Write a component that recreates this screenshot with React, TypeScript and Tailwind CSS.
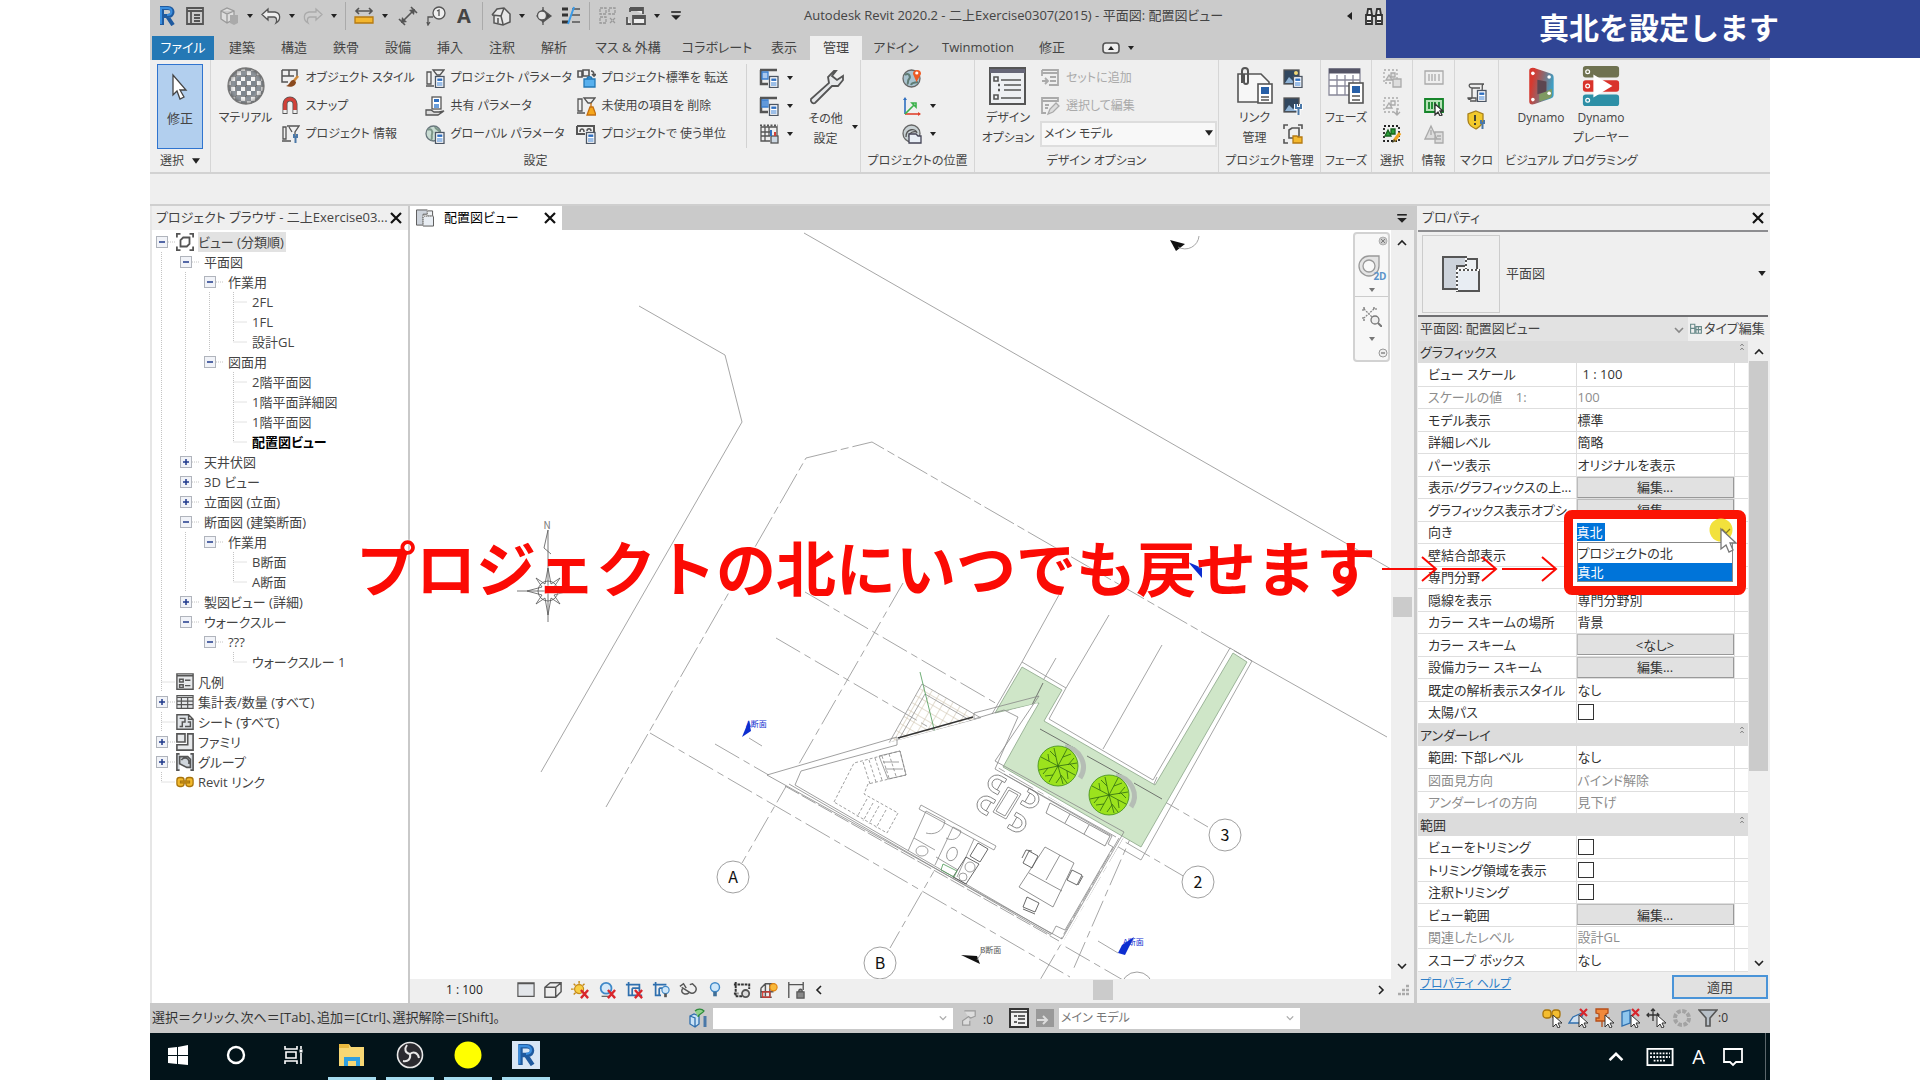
import { useState, type ReactNode } from "react";
import { clsx } from "clsx";
import { twMerge } from "tailwind-merge";

type IconProps = { children: ReactNode; box?: string; className?: string };

function Icon({ children, box = "0 0 20 20", className = "" }: IconProps) {
  return (
    <svg viewBox={box} className={twMerge("size-5 shrink-0", className)} fill="none" stroke="#555" strokeWidth="1.3" aria-hidden="true">
      {children}
    </svg>
  );
}

function Caret({ className = "" }: { className?: string }) {
  return (
    <Icon box="0 0 6 4" className={twMerge("h-1 w-1.5", className)}>
      <path d="M0 0h6L3 4z" fill="#222" stroke="none" />
    </Icon>
  );
}

function Chevron({ dir, className = "" }: { dir: "up" | "down" | "left" | "right"; className?: string }) {
  const paths = {
    up: "M1 7l4-4 4 4",
    down: "M1 3l4 4 4-4",
    left: "M7 1L3 5l4 4",
    right: "M3 1l4 4-4 4",
  };
  return (
    <Icon box="0 0 10 10" className={twMerge("size-2.5", className)}>
      <path d={paths[dir]} stroke="currentColor" strokeWidth="1.6" />
    </Icon>
  );
}

// little parameter sheet that sits in the corner of many ribbon icons
function Sheet({ x = 10, y = 8 }: { x?: number; y?: number }) {
  return (
    <g transform={`translate(${x} ${y})`}>
      <rect x=".5" y=".5" width="8.5" height="11" fill="#fff" stroke="#4b5563" />
      <rect x="2.3" y="2.5" width="5" height="2.4" fill="#2f6fc0" stroke="none" />
      <path d="M2 7h5.5M2 9h5.5" stroke="#3a7fd0" strokeWidth="1" />
    </g>
  );
}

function Wrench() {
  return <path d="M14 10v3h3v-3M15.5 13v6" stroke="#4a78a8" strokeWidth="2" />;
}

const icons = {
  objectStyle: (
    <Icon>
      <path d="M2 2h15v7M2 2v12h6M9 2v6M2 8h12" strokeWidth="1.5" />
      <path d="M18 8l-5 6" stroke="#d08a3a" strokeWidth="2.6" />
      <path d="M14 12c-4-1-4 5-8 6 5 2 10 0 10-4z" fill="#8a4a1f" stroke="none" />
    </Icon>
  ),
  snap: (
    <Icon>
      <path d="M5 18V8a5 5 0 0110 0v10" stroke="#555" strokeWidth="5" />
      <path d="M5 14V8a5 5 0 0110 0v6" stroke="#d24038" strokeWidth="3.4" />
      <path d="M5 17v-3M15 17v-3" stroke="#eee" strokeWidth="3.4" />
    </Icon>
  ),
  projectInfo: (
    <Icon>
      <path d="M3 3h3v12H3zM2 17h9M7 2h12l-4 6v4M9 3l3 5" />
      <Wrench />
    </Icon>
  ),
  projectParam: (
    <Icon>
      <path d="M2 4h4v12H2zM1 18h8M8 2h11l-4 5h-3z" />
      <Sheet />
    </Icon>
  ),
  sharedParam: (
    <Icon>
      <rect x="7" y="1" width="9" height="12" fill="#fff" />
      <rect x="9" y="3" width="5" height="3" fill="#2f6fc0" stroke="none" />
      <path d="M9 9h5M9 11h5" stroke="#3a7fd0" />
      <path d="M1 14h5l3 2h5l5-1-6 4H1z" fill="#ddd" />
    </Icon>
  ),
  globalParam: (
    <Icon>
      <circle cx="8.5" cy="9.5" r="7.5" fill="#c9dcd3" stroke="#68767c" />
      <path d="M3 6c3-2 5 1 4 4s1 4-1 6M10 3c1 3 4 2 5 5" stroke="#7d978a" strokeWidth="2" />
      <Sheet />
    </Icon>
  ),
  transfer: (
    <Icon>
      <path d="M2 3h4v6H2zM7 2h6v6H7zM15 3c3 0 3 2 3 4M16 6l2 2 2-2" strokeWidth="1.6" />
      <path d="M8 11h11v8H8zM11 11c0-3 5-3 5 0" fill="#58b0ee" stroke="#2478b5" />
    </Icon>
  ),
  purge: (
    <Icon>
      <path d="M2 3h4v12H2zM1 17h8M8 2h11l-4 5h-3z" />
      <path d="M15 7v4M14 11h3l3 8h-9z" fill="#f6a71c" stroke="#c46f10" />
    </Icon>
  ),
  units: (
    <Icon>
      <path d="M1 2h17v7M1 2v8h8" strokeWidth="2" />
      <path d="M4 8c0-4 4-4 4 0M11 7c0-3 4-3 4 0" strokeWidth="1.5" />
      <Sheet />
    </Icon>
  ),
  structural: (
    <Icon>
      <path d="M1 2h17M2 2v14h7" strokeWidth="2.5" />
      <path d="M3 4h6v7H3z" fill="#a9c8ee" stroke="#3a7fd0" />
      <Sheet />
    </Icon>
  ),
  mep: (
    <Icon>
      <path d="M1 2h17M2 2v14h7" strokeWidth="2.5" />
      <path d="M3 4h6v7H3zM5 4v7M7 4v7" fill="#a9c8ee" stroke="#3a7fd0" />
      <Sheet />
    </Icon>
  ),
  panels: (
    <Icon>
      <path d="M2 3h16v9M2 3v14h9M2 8h9M2 12h9M6 3v14M10 3v9" />
      <path d="M1 1.5h18" strokeDasharray="2 1.5" strokeWidth="2" />
      <rect x="12" y="12" width="7" height="7" fill="#ccd7e2" />
      <path d="M12 6v6" stroke="#2f6fc0" strokeWidth="2" />
      <path d="M16 8v4" stroke="#d24038" strokeWidth="2" />
    </Icon>
  ),
  location: (
    <Icon>
      <circle cx="9.5" cy="10.5" r="8.5" fill="#a9c3cf" stroke="#666" />
      <path d="M3 7c4-3 6 2 4 4s0 4-2 5M9 17c1-3 4-2 7-3" stroke="#5f7c74" strokeWidth="2" />
      <path d="M14.5 14L11 6a4 4 0 118 0z" fill="#ee5a24" stroke="none" />
      <circle cx="14.8" cy="5" r="1.6" fill="#fff" stroke="none" />
    </Icon>
  ),
  coords: (
    <Icon>
      <path d="M3 18V3" stroke="#2f6fc0" strokeWidth="1.6" />
      <path d="M3 18h15" stroke="#e0432e" strokeWidth="1.6" />
      <path d="M3 18l9-9M10 7h4v4z" stroke="#3bb14a" strokeWidth="1.6" />
      <path d="M1 4l2-3 2 3z" fill="#2f6fc0" stroke="none" />
      <path d="M16 16l3 2-3 2z" fill="#e0432e" stroke="none" />
    </Icon>
  ),
  position: (
    <Icon>
      <circle cx="9.5" cy="9.5" r="8.5" fill="#c8d1d4" stroke="#666" />
      <path d="M4 13c0-9 10-9 11-4M7 13c0-5 5-6 8-5" />
      <path d="M7 10h7l2 2h3v7H7z" fill="#e8eef5" stroke="#445" />
    </Icon>
  ),
  addToSet: (
    <Icon>
      <path d="M2 2h16v15H9M2 2v6M2 5h16M10 9h6M10 13h6M2 13h5M5 10l3 3-3 3" stroke="#aaa" strokeWidth="1.8" />
    </Icon>
  ),
  pickToEdit: (
    <Icon>
      <path d="M2 7V2h16v4M2 2v15h4M2 5h16M5 9h4M5 12h3" stroke="#aaa" strokeWidth="1.8" />
      <path d="M8 18l2-5 6-6 3 3-6 6z" stroke="#aaa" fill="#ddd" />
    </Icon>
  ),
  imageSheet: (
    <Icon>
      <rect x="1" y="2" width="15" height="14" fill="#31475f" />
      <path d="M2 15l4-6 4 4 5-3v5z" fill="#8fb3d6" stroke="none" />
      <circle cx="13" cy="5" r="2" fill="#f3d777" stroke="none" />
      <Sheet />
    </Icon>
  ),
  imageTool: (
    <Icon>
      <rect x="1" y="2" width="15" height="14" fill="#31475f" />
      <path d="M2 15l4-6 4 4 5-3v5z" fill="#8fb3d6" stroke="none" />
      <path d="M13 8v4h5V8M15.5 12v7" stroke="#fff" strokeWidth="4" />
      <path d="M13 8v4h5V8M15.5 12v7" stroke="#4a78a8" strokeWidth="2" />
    </Icon>
  ),
  startView: (
    <Icon>
      <path d="M1 5V1h4M15 1h4v4M1 15v4h4M6 6l3-2h7v8l-2 2H6z" strokeWidth="1.6" />
      <path d="M10 12h4l1 1h4v6h-9z" fill="#f4b92e" stroke="#b57a12" />
    </Icon>
  ),
  selSave: (
    <Icon>
      <path d="M2 2h13v13H2z" strokeDasharray="2 2" stroke="#aaa" />
      <path d="M4 12l3-5 3 5zM9 5h4v4H9zM11 11h8v8h-8z" stroke="#aaa" fill="#ddd" />
    </Icon>
  ),
  selLoad: (
    <Icon>
      <path d="M2 2h14v14H2z" strokeDasharray="2 2" stroke="#aaa" />
      <path d="M4 12l3-5 3 5zM9 5h4v4H9zM15 12v7M12 16l3 3 3-3" stroke="#aaa" />
    </Icon>
  ),
  selEdit: (
    <Icon>
      <path d="M2 2h15v15H2z" strokeDasharray="2 2" stroke="#222" strokeWidth="1.8" />
      <path d="M3 12l3-6 3 6zM9 5h4v5H9z" fill="#28a038" stroke="#17641f" />
      <path d="M18 9l-6 8" stroke="#f0a21e" strokeWidth="3.2" />
      <path d="M12 15l-2 4 4-2" fill="#553" stroke="none" />
    </Icon>
  ),
  ids: (
    <Icon>
      <path d="M1 3h18v13H1zM5 6v7M8 6v7M11 6v7M15 6v7" stroke="#aaa" />
    </Icon>
  ),
  idSelect: (
    <Icon>
      <path d="M1 3h18v13H1zM5 6v7M8 6v7M11 6v7M15 6v7" stroke="#16852a" fill="#b7e2b8" strokeWidth="1.8" />
      <path d="M11 8v11l3-3 2 4 2-1-2-4h3z" fill="#fff" stroke="#333" />
    </Icon>
  ),
  warnings: (
    <Icon>
      <path d="M7 2l6 13H1zM7 6v5M11 8h8v11h-8zM13 12h4M13 15h4" stroke="#aaa" fill="#ddd" />
    </Icon>
  ),
  macro: (
    <Icon>
      <path d="M4 2h13c-3 0-1 4-2 6M4 2c-3 0-2 4 1 4h8M5 6v9c0 3-4 3-4 1h8v3H3" fill="#eee" />
      <Sheet />
    </Icon>
  ),
  macroSecurity: (
    <Icon>
      <path d="M9 1l7 3v6c0 5-4 7-7 9-4-2-8-4-8-9V4z" fill="#f2c92c" stroke="#a8801c" />
      <path d="M8 5v6M8 13v2" stroke="#443" strokeWidth="2" />
      <Wrench />
    </Icon>
  ),
};

function RevitMark({ className = "" }: { className?: string }) {
  return (
    <Icon className={className}>
      <path d="M5 19V2h6c6 0 6 8 0 8H7M10 10l6 9" stroke="#1f5a9f" strokeWidth="4" />
      <path d="M4 18V2h6c6 0 6 7 0 7" stroke="#3b8ede" strokeWidth="2" />
    </Icon>
  );
}

function PlanIcon({ className = "" }: { className?: string }) {
  return (
    <Icon box="0 0 38 38" className={className}>
      <path d="M1 2h23v9H15v23H1z" fill="#cdd3db" strokeWidth="2" />
      <path d="M24 4h11v11H24z" fill="#eef1f4" strokeWidth="2" />
      <path d="M15 15h22v21H15z" fill="#e8edf3" strokeWidth="2" />
      <path d="M15 15h22M15 15v21M24 3v12" stroke="#fff" strokeWidth="2" strokeDasharray="2 2" />
    </Icon>
  );
}

function QuickAccess() {
  return (
    <div className="flex items-center gap-2 pl-[7px]">
      <RevitMark />
      <Icon><path d="M2 2h16v16H2zM2 5h16M6 6v12M9 9h6M9 12h6M9 15h6" strokeWidth="1.8" /></Icon>
      <span className="ml-1.5 flex items-center gap-2">
        <Icon><path d="M2 5l6-3 7 3v8l-7 4-6-4zM2 5l6 3 7-3M8 8v9" stroke="#999" fill="#ddd" /><path d="M11 9h8v8l-4 2-4-2z" fill="#aaa" stroke="none" /></Icon>
        <Caret />
      </span>
      <span className="flex items-center gap-2">
        <Icon><path d="M7 3L1 8.5 7 14v-3h6c3 0 3 4 2 6 5-3 5-10-1-11H7z" fill="#eee" /></Icon>
        <Caret />
      </span>
      <span className="flex items-center gap-2">
        <Icon><path d="M13 3l6 5.5-6 5.5v-3H7c-3 0-3 4-2 6C0 14 0 7 6 6h7z" fill="#ccc" stroke="#aaa" /></Icon>
        <Caret />
      </span>
      <span className="h-7 w-px bg-[#aaa]" />
      <span className="flex items-center gap-2">
        <Icon><path d="M2 5h16M5 2L2 5l3 3M15 2l3 3-3 3" strokeWidth="1.6" /><path d="M1 11h18v6H1z" fill="#f3b62e" stroke="#b57a12" /></Icon>
        <Caret />
      </span>
      <Icon className="ml-0.5"><path d="M5 15L15 5M1 13l6 6M13 1l6 6" strokeWidth="1.6" /><path d="M3 17l1-6 5 5zM17 3l-6 1 5 5z" fill="#555" stroke="none" /></Icon>
      <Icon><circle cx="13" cy="7" r="6" fill="#eee" /><path d="M11 5l2-1v6M2 18v-7h5M1 16l1 3 2-3" /></Icon>
      <span className="w-5 text-center text-xl font-bold text-[#444]">A</span>
      <span className="h-7 w-px bg-[#aaa]" />
      <span className="flex items-center gap-2">
        <Icon><path d="M1 9l5-6 7-1 6 6v8l-7 3-9-2V9M1 9l9 1 2 8M10 10l3-8M7 17v-5" fill="#e7e7e7" strokeWidth="1.5" /></Icon>
        <Caret />
      </span>
      <Icon><path d="M10 1v18M4 10l6-6v12z" /><path d="M10 4l8 6-8 6z" fill="#444" /><circle cx="9" cy="9.5" r="4.5" fill="#e5e5e5" /></Icon>
      <Icon><path d="M1 3h6M1 9h6M1 16h6" stroke="#333" strokeWidth="3" /><path d="M11 3h8M11 9h8M11 16h8" /><path d="M13 1L7 18" stroke="#3a9be8" strokeWidth="2" /></Icon>
      <span className="h-7 w-px bg-[#aaa]" />
      <Icon><path d="M2 2h6v6H2zM11 2h6v6h-6zM2 11h6v6H2zM12 12l5 5M17 12l-5 5" stroke="#999" strokeDasharray="3 1" /></Icon>
      <span className="flex items-center gap-2">
        <Icon><path d="M4 2h13v6M4 2v4M4 4h13M1 11v7h4M7 10h12v8H7zM7 12h12" strokeWidth="1.8" fill="#eee" /></Icon>
        <Caret />
      </span>
      <Icon className="size-4"><path d="M4 5h12" stroke="#222" strokeWidth="2" /><path d="M4 9h12l-6 6z" fill="#222" stroke="none" /></Icon>
    </div>
  );
}

const TABS = [
  { label: "建築", width: "w-13" },
  { label: "構造", width: "w-13" },
  { label: "鉄骨", width: "w-13" },
  { label: "設備", width: "w-13" },
  { label: "挿入", width: "w-13" },
  { label: "注釈", width: "w-13" },
  { label: "解析", width: "w-13" },
  { label: "マス & 外構", width: "w-24" },
  { label: "コラボレート", width: "w-[82px]" },
  { label: "表示", width: "w-13" },
  { label: "管理", width: "w-13" },
  { label: "アドイン", width: "w-17" },
  { label: "Twinmotion", width: "w-24" },
  { label: "修正", width: "w-13" },
];

function TabBar() {
  const [active, setActive] = useState("管理");
  return (
    <nav className="flex h-6 items-stretch pl-0.5 text-[13px]">
      <button className="mr-0.5 w-[62px] bg-[#2478b5] text-[13px] text-white">ファイル</button>
      {TABS.map((tab) => (
        <button
          key={tab.label}
          onClick={() => setActive(tab.label)}
          className={clsx("shrink-0 whitespace-nowrap", tab.width, active === tab.label && "bg-[#efefef]")}
        >
          {tab.label}
        </button>
      ))}
      <span className="flex items-center gap-2 pl-6">
        <Icon box="0 0 18 12" className="h-3 w-[18px]">
          <rect x="1" y="1" width="16" height="10" rx="3" strokeWidth="1.6" fill="#eee" />
          <path d="M6 8l3-4 3 4z" fill="#222" stroke="none" />
        </Icon>
        <Caret />
      </span>
    </nav>
  );
}

function Panel({ title, className, children }: { title: ReactNode; className: string; children: ReactNode }) {
  return (
    <section className={clsx("flex shrink-0 flex-col border-r border-[#d6d6d6]", className)}>
      <div className="flex flex-1 justify-center pt-1">{children}</div>
      <h2 className="flex h-[22px] items-center justify-center gap-2 text-xs whitespace-nowrap">{title}</h2>
    </section>
  );
}

function BigButton({ icon, lines, className = "" }: { icon: ReactNode; lines: string[]; className?: string }) {
  return (
    <button className={clsx("flex flex-col items-center text-xs leading-5 whitespace-nowrap", className)}>
      <span className="flex h-11 items-center">{icon}</span>
      {lines.map((line) => (
        <span key={line}>{line}</span>
      ))}
    </button>
  );
}

function SmallButton({ icon, label, disabled }: { icon: ReactNode; label: string; disabled?: boolean }) {
  return (
    <button disabled={disabled} className="flex h-7 items-center gap-1.5 text-xs whitespace-nowrap disabled:text-[#aaa]">
      {icon}
      {label}
    </button>
  );
}

function IconButton({ icon, label, menu }: { icon: ReactNode; label: string; menu?: boolean }) {
  return (
    <button aria-label={label} className="flex h-7 items-center gap-2">
      {icon}
      {menu && <Caret />}
    </button>
  );
}

function Ribbon() {
  return (
    <div className="flex h-[114px] border-b-2 border-[#d2d2d2] bg-[#efefef]">
      <Panel className="w-[61px]" title={<>選択 <Caret className="h-1.5 w-2" /></>}>
        <button className="flex h-[85px] w-[46px] flex-col items-center border border-[#2f74cf] bg-[#b2cfee] pt-2 text-[13px]">
          <Icon box="0 0 16 26" className="h-7 w-4">
            <path d="M1 1v20l4-4 3 8 4-2-4-7h6z" fill="#fff" stroke="#444" />
          </Icon>
          <span className="mt-2">修正</span>
        </button>
      </Panel>

      <Panel className="w-[650px]" title="設定">
        <BigButton
          className="w-16"
          lines={["マテリアル"]}
          icon={
            <Icon box="0 0 40 40" className="size-10">
              <defs>
                <pattern id="checks" width="10" height="10" patternUnits="userSpaceOnUse">
                  <rect width="10" height="10" fill="#f4f4f4" />
                  <path d="M0 0h5v5H0zM5 5h5v5H5z" fill="#7f878f" stroke="none" />
                </pattern>
                <radialGradient id="ball">
                  <stop offset=".6" stopColor="#fff" stopOpacity="0" />
                  <stop offset="1" stopColor="#444" stopOpacity=".6" />
                </radialGradient>
              </defs>
              <circle cx="20" cy="20" r="18" fill="url(#checks)" stroke="none" />
              <circle cx="20" cy="20" r="18" fill="url(#ball)" stroke="#777" />
            </Icon>
          }
        />
        <div className="w-[145px] pl-0.5">
          <SmallButton icon={icons.objectStyle} label="オブジェクト スタイル" />
          <SmallButton icon={icons.snap} label="スナップ" />
          <SmallButton icon={icons.projectInfo} label="プロジェクト 情報" />
        </div>
        <div className="w-[151px] pl-0.5">
          <SmallButton icon={icons.projectParam} label="プロジェクト パラメータ" />
          <SmallButton icon={icons.sharedParam} label="共有 パラメータ" />
          <SmallButton icon={icons.globalParam} label="グローバル  パラメータ" />
        </div>
        <div className="w-[172px] pl-0.5">
          <SmallButton icon={icons.transfer} label="プロジェクト標準を 転送" />
          <SmallButton icon={icons.purge} label="未使用の項目を 削除" />
          <SmallButton icon={icons.units} label="プロジェクトで 使う単位" />
        </div>
        <div className="h-[84px] w-[54px] border-l border-[#d2d2d2] pl-3">
          <IconButton icon={icons.structural} label="構造設定" menu />
          <IconButton icon={icons.mep} label="設備設定" menu />
          <IconButton icon={icons.panels} label="盤集計表テンプレート" menu />
        </div>
        <div className="flex items-center">
          <BigButton
            className="w-[52px]"
            lines={["その他", "設定"]}
            icon={
              <Icon box="0 0 36 36" className="size-9">
                <path d="M26 2l-6 6 1 6L3 30c-1 3 2 5 4 4l17-17 6 0 5-6V7l-6 4-5-4 4-5z" fill="#e6e8ea" strokeWidth="1.8" />
              </Icon>
            }
          />
          <Caret className="mt-10" />
        </div>
      </Panel>

      <Panel className="w-[114px]" title="プロジェクトの位置">
        <div className="w-8">
          <IconButton icon={icons.location} label="場所" />
          <IconButton icon={icons.coords} label="座標" menu />
          <IconButton icon={icons.position} label="位置" menu />
        </div>
      </Panel>

      <Panel className="w-[244px]" title="デザイン オプション">
        <BigButton
          className="w-16"
          lines={["デザイン", "オプション"]}
          icon={
            <Icon box="0 0 38 40" className="h-10 w-[38px]">
              <rect x="1" y="2" width="35" height="36" fill="#eef0f3" strokeWidth="2" />
              <path d="M1 5h35" strokeWidth="4" stroke="#667" />
              <path d="M5 11h4v4H5zM5 29h4v4H5zM12 14h20M15 19h17M15 24h17M12 32h20" strokeWidth="1.6" />
              <path d="M9 19h2M9 24h2" strokeWidth="2.5" />
            </Icon>
          }
        />
        <div className="w-[177px]">
          <SmallButton icon={icons.addToSet} label="セットに追加" disabled />
          <SmallButton icon={icons.pickToEdit} label="選択して編集" disabled />
          <div className="relative">
            <select aria-label="デザイン オプション" className="h-[26px] w-full appearance-none border-2 border-[#ddd] bg-[#f8f8f8] pl-0.5 text-xs">
              <option>メイン モデル</option>
            </select>
            <Caret className="absolute top-2.5 right-1 h-1.5 w-2" />
          </div>
        </div>
      </Panel>

      <Panel className="w-[102px]" title="プロジェクト管理">
        <BigButton
          className="w-[56px]"
          lines={["リンク", "管理"]}
          icon={
            <Icon box="0 0 38 40" className="h-10 w-[38px]">
              <path d="M2 8h23l8 8v20H2z" fill="#f7f7f7" strokeWidth="1.6" />
              <path d="M6 17V5a3 3 0 016 0v11a2 2 0 01-4 0V8" strokeWidth="2" />
              <rect x="22" y="18" width="14" height="19" fill="#fff" strokeWidth="1.6" />
              <rect x="25" y="21" width="8" height="7" fill="#2860a8" stroke="none" />
              <path d="M25 31h8M25 34h8" />
            </Icon>
          }
        />
        <div className="pr-2.5">
          <IconButton icon={icons.imageSheet} label="イメージ" />
          <IconButton icon={icons.imageTool} label="デカール" />
          <IconButton icon={icons.startView} label="開始ビュー" />
        </div>
      </Panel>

      <Panel className="w-[51px]" title="フェーズ">
        <BigButton
          lines={["フェーズ"]}
          icon={
            <Icon box="0 0 38 40" className="h-10 w-[38px]">
              <path d="M2 3h31v26H2zM2 14h31M2 20h31M10 9v20M18 9v20M26 9v20" fill="#fff" stroke="#889" />
              <path d="M2 5h31" stroke="#556" strokeWidth="5" />
              <rect x="22" y="17" width="14" height="20" fill="#fff" strokeWidth="1.6" />
              <rect x="25" y="20" width="8" height="7" fill="#2860a8" stroke="none" />
              <path d="M25 30h8M25 34h8" />
            </Icon>
          }
        />
      </Panel>

      <Panel className="w-[41px]" title="選択">
        <div>
          <IconButton icon={icons.selSave} label="選択を保存" />
          <IconButton icon={icons.selLoad} label="選択をロード" />
          <IconButton icon={icons.selEdit} label="選択を編集" />
        </div>
      </Panel>

      <Panel className="w-[42px]" title="情報">
        <div>
          <IconButton icon={icons.ids} label="要素ID" />
          <IconButton icon={icons.idSelect} label="IDで選択" />
          <IconButton icon={icons.warnings} label="警告" />
        </div>
      </Panel>

      <Panel className="w-[44px]" title="マクロ">
        <div className="pt-3.5">
          <IconButton icon={icons.macro} label="マクロ マネージャ" />
          <IconButton icon={icons.macroSecurity} label="マクロ セキュリティ" />
        </div>
      </Panel>

      <section className="flex flex-1 flex-col">
        <div className="flex flex-1 gap-1 pt-1 pl-3.5">
          <BigButton
            className="w-14"
            lines={["Dynamo"]}
            icon={
              <Icon box="0 0 32 42" className="h-[38px] w-8">
                <defs>
                  <linearGradient id="dynamo" x1="0" x2="1" y1="0" y2=".3">
                    <stop offset=".2" stopColor="#d7392f" />
                    <stop offset=".6" stopColor="#8a6a72" />
                    <stop offset="1" stopColor="#3f9fc4" />
                  </linearGradient>
                </defs>
                <path d="M3 4c0-3 4-4 8-2l15 5c3 1 4 2 4 5v18c0 3-1 4-4 5L9 41c-4 1-6 0-6-3z" fill="url(#dynamo)" stroke="none" />
                <path d="M14 30l14-6v6c0 3-1 4-4 5l-10 3z" fill="#7f9a62" stroke="none" />
                <path d="M12 14l10 2v11l-10 3z" fill="#5d4650" stroke="none" />
                <g fill="#fff" stroke="none">
                  <circle cx="7" cy="7" r="2" /><circle cx="25" cy="11" r="2" />
                  <circle cx="7" cy="36" r="2" /><circle cx="25" cy="29" r="2" />
                </g>
              </Icon>
            }
          />
          <BigButton
            className="w-14"
            lines={["Dynamo", "プレーヤー"]}
            icon={
              <Icon box="0 0 38 42" className="h-10 w-[38px]">
                <rect x="0" y="0" width="38" height="12" rx="3" fill="#6f7250" stroke="none" />
                <rect x="0" y="15" width="38" height="12" rx="3" fill="#d9332b" stroke="none" />
                <rect x="0" y="30" width="38" height="12" rx="3" fill="#2d8fa6" stroke="none" />
                <path d="M11 9l20 12-20 12z" fill="#fff" stroke="none" />
                <circle cx="5" cy="6" r="2" stroke="#fff" /><circle cx="5" cy="21" r="2" stroke="#fff" /><circle cx="5" cy="36" r="2" stroke="#fff" />
              </Icon>
            }
          />
        </div>
        <h2 className="flex h-[22px] items-center pl-1.5 text-xs whitespace-nowrap">ビジュアル プログラミング</h2>
      </section>
    </div>
  );
}

// guides: one letter per 24px column. i = line, t = tee, l = corner, - and + = toggles, . = empty
const TREE: { guides: string; label: string; icon?: string; bold?: boolean }[] = [
  { guides: "-", label: "ビュー (分類順)", icon: "views" },
  { guides: "i-", label: "平面図" },
  { guides: "ii-", label: "作業用" },
  { guides: "iiit", label: "2FL" },
  { guides: "iiit", label: "1FL" },
  { guides: "iiil", label: "設計GL" },
  { guides: "ii-", label: "図面用" },
  { guides: "ii.t", label: "2階平面図" },
  { guides: "ii.t", label: "1階平面詳細図" },
  { guides: "ii.t", label: "1階平面図" },
  { guides: "ii.l", label: "配置図ビュー", bold: true },
  { guides: "i+", label: "天井伏図" },
  { guides: "i+", label: "3D ビュー" },
  { guides: "i+", label: "立面図 (立面)" },
  { guides: "i-", label: "断面図 (建築断面)" },
  { guides: "ii-", label: "作業用" },
  { guides: "ii.t", label: "B断面" },
  { guides: "ii.l", label: "A断面" },
  { guides: "i+", label: "製図ビュー (詳細)" },
  { guides: "i-", label: "ウォークスルー" },
  { guides: "i.-", label: "???" },
  { guides: "i..l", label: "ウォークスルー 1" },
  { guides: "t", label: "凡例", icon: "legend" },
  { guides: "+", label: "集計表/数量 (すべて)", icon: "schedule" },
  { guides: "t", label: "シート (すべて)", icon: "sheet" },
  { guides: "+", label: "ファミリ", icon: "family" },
  { guides: "+", label: "グループ", icon: "group" },
  { guides: "l", label: "Revit リンク", icon: "link" },
];

const TREE_ICONS: Record<string, ReactNode> = {
  views: <path d="M1 5V1h4M15 1h4v4M1 15v4h4M19 15v4h-4M5 8l3-3h7v7l-3 3H5z" strokeWidth="2" />,
  legend: <path d="M1 1h18v17H1zM1 3h18M4 7h4v3H4zM4 13h4v3H4zM10 8h6M10 14h6" strokeWidth="1.6" fill="#e6e8ea" />,
  schedule: <path d="M1 3h18v14H1zM1 5h18M1 9h18M1 13h18M6 5v12M13 5v12" fill="#e6e8ea" />,
  sheet: <path d="M1 2h13l5 5v11H1zM14 2v5h5M4 6h6v4H7v5H4M13 10h3v5h-6" strokeWidth="1.6" fill="#e0e4e8" />,
  family: <path d="M1 1h9v9H1zM13 1h6v18H1v-6h12z" strokeWidth="1.8" fill="#e6e8ea" />,
  group: <path d="M4 1H1v18h3M16 1h3v18h-3M4 4h9l3 3v9h-4L4 12zM6 8a4 4 0 118 4" strokeWidth="1.8" fill="#d0d6dc" />,
  link: (
    <g stroke="#a8740c" fill="#f2b92c" strokeWidth="1.4">
      <rect x="1" y="5" width="8" height="10" rx="3" />
      <rect x="11" y="5" width="8" height="10" rx="3" />
      <path d="M5 9h10v2H5z" />
    </g>
  ),
};

const GUIDE_PATHS: Record<string, string> = {
  i: "M9.5 0v20",
  t: "M9.5 0v20M9.5 10h14",
  l: "M9.5 0v10h14",
  "-": "M16 10h8",
  "+": "M16 10h8",
  ".": "",
};

function Guide({ kind }: { kind: string }) {
  return (
    <Icon box="0 0 24 20" className="h-5 w-6">
      <path d={GUIDE_PATHS[kind]} stroke="#c4c4c4" strokeWidth="1" strokeDasharray="1 1" />
      {(kind === "-" || kind === "+") && (
        <>
          <rect x="4.5" y="4.5" width="11" height="11" fill="#f1f3f8" stroke="#b0b4bc" strokeWidth="1" />
          <path d={kind === "+" ? "M7 10h6M10 7v6" : "M7 10h6"} stroke="#1f3a8c" strokeWidth="1.5" />
        </>
      )}
    </Icon>
  );
}

function ProjectBrowser() {
  return (
    <aside className="flex w-[260px] shrink-0 flex-col border-r-2 border-l-2 border-[#c9c9c9] border-l-[#e6e6e6] bg-white">
      <header className="flex h-6 items-center justify-between bg-[#efefef] pr-1.5 pl-1 text-[13px]">
        <h2 className="whitespace-nowrap">プロジェクト ブラウザ - 二上Exercise03...</h2>
        <CloseButton />
      </header>
      <ul role="tree" className="pt-0.5 text-[13px] leading-5">
        {TREE.map((row, i) => (
          <li key={i} role="treeitem" className="flex h-5 items-center whitespace-nowrap">
            {row.guides.split("").map((kind, col) => (
              <Guide key={col} kind={kind} />
            ))}
            {row.icon && <Icon className="mr-1 size-[18px]">{TREE_ICONS[row.icon]}</Icon>}
            <span
              className={clsx(
                !row.icon && "pl-1",
                row.bold && "font-semibold text-black",
                i === 0 && "bg-[#e2e2e2] pr-0.5",
              )}
            >
              {row.label}
            </span>
          </li>
        ))}
      </ul>
    </aside>
  );
}

function CloseButton() {
  return (
    <button aria-label="閉じる">
      <Icon box="0 0 12 12" className="size-3">
        <path d="M1 1l10 10M11 1L1 11" stroke="#111" strokeWidth="2.2" />
      </Icon>
    </button>
  );
}

function Bubble({ x, y, label }: { x: number; y: number; label: string }) {
  return (
    <g>
      <circle cx={x} cy={y} r="16" fill="#fff" stroke="#888" strokeWidth=".8" />
      <text x={x} y={y + 6} textAnchor="middle" fontSize="16" fill="#111" stroke="none">{label}</text>
    </g>
  );
}

function Tree({ x, y }: { x: number; y: number }) {
  return (
    <g transform={`translate(${x} ${y})`}>
      <path d="M7-19A20 20 0 0122 12" stroke="#b5bdb5" strokeWidth="5" />
      <circle r="20" fill="#9ce31d" stroke="#3f8c1c" />
      <path
        d="M0 0L-4-18M-2-9l-6-6M0 0L9-17M5-9l8-3M0 0l19-3M10-1l6-7M0 0l17 9M9 5l1 8M0 0l5 18M3 10l-5 7M0 0l-9 16M-5 9l-8 1M0 0l-19 4M-10 2l-5 6M0 0l-17-9M-9-5l-1-7M12-2l5 5M3 9l6 8"
        stroke="#2f6b12"
        strokeWidth=".8"
      />
    </g>
  );
}

function RoundChair({ x, y, turn }: { x: number; y: number; turn: number }) {
  return (
    <path
      transform={`translate(${x} ${y}) rotate(${turn})`}
      d="M-9 6V0a9 9 0 0118 0v6h-4V0a5 5 0 00-10 0v6zM-5 3h10"
    />
  );
}

function SitePlan() {
  return (
    <svg
      viewBox="410 230 981 750"
      preserveAspectRatio="xMinYMin slice"
      className="block size-full font-['Noto_Sans_CJK_JP',sans-serif]"
      fill="none"
      stroke="#8f8f8f"
      strokeWidth=".8"
      role="img"
      aria-label="配置図"
    >
      <defs>
        <pattern id="deck" width="8" height="8" patternUnits="userSpaceOnUse" patternTransform="rotate(30)">
          <path d="M0 0h8M0 0v8" stroke="#c9bda6" strokeWidth="1" />
        </pattern>
      </defs>

      {/* roads and site edges */}
      <path d="M639 306l86 49 17 67L541 772M804 233l587 336M1252 661l135 76" />
      <path d="M606 807L806 458l66-16 380 219" strokeDasharray="34 4 8 4" />

      {/* grid lines */}
      <g strokeDasharray="28 5 7 5">
        <path d="M903 583L742 863M1056 658L890 948M1157 777l-84 193M1123 838l-83 142" />
        <path d="M805 592l403 235M776 638l409 239M650 733l420 244M715 744l408 236" />
      </g>
      <path d="M1162 645l-59 104M1109 615l-43 73M1060 593l-38 69" />

      {/* garden */}
      <path d="M1022 667l40 23-18 31 111 64 78-132 14 9-106 185-138-80 25-45 11-19-44 10z" fill="#cfe6c8" stroke="#8aa588" />
      <path d="M992 714l30-52 44 26-17 31 104 61 77-132 22 13-111 199-146-84" />
      <path d="M1040 729l36 20M1087 756l36 20M1134 783l28 16M1043 683l-12 24" stroke="#555" />
      <Tree x={1058} y={766} />
      <Tree x={1109} y={795} />

      {/* deck */}
      <path d="M922 684l59 34-92 25z" fill="url(#deck)" />
      <path d="M925 694l48 28-75 19z" />
      <path d="M920 672l17 69" stroke="#4d9a55" />

      {/* building */}
      <g stroke="#888">
        <path d="M767 775l271-72-43 65 128 70-62 107z" fill="#fff" stroke="none" />
        <path d="M767 775l130-38v8l-96 26-6 14 257 149 4-8 9 4 48-83-5-3 4-8-117-67 23-52-14-7-30 9v-6l65-17-44 65 129 71-62 107z" />
        <path d="M785 786l274 155M1119 838l-58 101" strokeDasharray="16 3" />
        <path d="M789 784l262 151M1004 774l112 63" />
        <path d="M898 738l75-21" stroke="#333" strokeWidth="1.4" />
        <path d="M834 802l20-39 46-12 6 24-38 9-4 10 34 19-11 20z" strokeDasharray="3 2" />
        <path d="M863 762l7 22M869 760l7 22M875 758l7 22M882 756l7 22M889 754l7 22M867 799l-10 18M873 803l-10 18M879 806l-10 18M886 810l-10 18" strokeDasharray="3 2" />
        <path d="M879 756l21-5 6 24-18 4zM883 762h16M885 769h18" />
        <path d="M921 805l75 41-2 4-75-41zM926 811l-18 40M953 827l-18 38M974 839l-17 38M926 811l19 10c-2 12-12 14-19 12M914 838l21 12M953 827l8 4c-2 9-10 10-15 7M936 857l22 13" />
        <ellipse cx="922" cy="851" rx="6" ry="5" />
        <ellipse cx="952" cy="854" rx="5" ry="7" transform="rotate(25 952 854)" />
        <path d="M978 843l10 6-8 13-10-6zM966 857l13 7-13 20-13-7z" stroke="#444" />
        <circle cx="970" cy="867" r="5" /><circle cx="963" cy="877" r="4" />
        <path d="M943 864l14 7-3 6-13-7z" stroke="#4d9a55" />
      </g>

      {/* furniture */}
      <g stroke="#777">
        <path d="M1008 787l13 7-15 25-13-7zM1009 790l9 5-13 21-9-5z" />
        <RoundChair x={997} y={784} turn={-60} />
        <RoundChair x={986} y={805} turn={-60} />
        <RoundChair x={1030} y={799} turn={120} />
        <RoundChair x={1017} y={823} turn={120} />
        <path d="M1050 803l60 33-5 10-59-33zM1070 814l-5 9M1089 825l-5 9" />
        <path d="M1045 847l29 16-21 44-34-20zM1060 855l-14 25M1029 873l33 18" />
        <path d="M1029 851l9 5-6 12-9-5zM1022 858l4-8 6 1M1072 870l10 5-5 10-10-5zM1083 876l-5 9M1027 897l12 6-4 9-12-5zM1023 909l12 5" stroke="#444" />
      </g>

      <Bubble x={733} y={877} label="A" />
      <Bubble x={880} y={963} label="B" />
      <Bubble x={1225} y={835} label="3" />
      <Bubble x={1198} y={882} label="2" />
      <circle cx="1137" cy="988" r="16" fill="#fff" stroke="#888" />

      {/* section marks */}
      <g stroke="none" fill="#0d2ed0" fontSize="8">
        <path d="M742 737l7-17 2 11z" />
        <path d="M1118 953l4-8 12-8-9 18z" />
        <path d="M1188 562l14 6v10z" />
        <text x="746" y="727">A断面</text>
        <text x="1123" y="945">A断面</text>
        <path d="M961 955l16 1 3 8z" fill="#111" />
        <text x="980" y="953" fill="#555">B断面</text>
        <path d="M1170 240l15 4-9 7z" fill="#111" />
      </g>
      <path d="M749 738l13 8M1098 941l20 12M977 960l8-13M1199 236a14 14 0 01-21 11" />

      {/* compass */}
      <text x="547" y="529" textAnchor="middle" fontSize="10" fill="#777" stroke="none">N</text>
      <g stroke="#555">
        <path d="M548 530v92M517 591h61M548 530l-4 18 7 6" />
        <path d="M548 568l3 16 9-6-6 9 15 4-15 4 6 9-9-6-3 17-3-17-9 6 6-9-15-4 15-4-6-9 9 6z" />
        <circle cx="548" cy="591" r="10" />
      </g>
    </svg>
  );
}

function NavigationBar() {
  return (
    <div className="absolute top-0.5 right-px flex h-[130px] w-[37px] flex-col items-center rounded border-2 border-[#d2d2d2] bg-[#f7f7f7]">
      <Icon className="mt-0.5 size-2.5 self-end"><circle cx="10" cy="10" r="8" fill="#ccc" stroke="#999" /><path d="M6 6l8 8M14 6l-8 8" /></Icon>
      <button className="relative mt-2 h-7 w-[30px]" aria-label="ナビゲーション ホイール">
        <Icon box="0 0 28 28" className="size-7">
          <path d="M12 2h10v10a10 10 0 11-10-10z" fill="#e4e4e4" stroke="#999" />
          <circle cx="12" cy="12" r="6" fill="#f8f8f8" stroke="#999" />
        </Icon>
        <span className="absolute right-0 bottom-0 text-[10px] leading-3 font-bold text-[#5b93c9]">2D</span>
      </button>
      <Caret className="mt-1.5 opacity-60" />
      <span className="mt-1 h-px w-full bg-[#ccc]" />
      <button className="mt-2.5" aria-label="ズーム">
        <Icon>
          <path d="M2 2l9 9M12 2L2 11M1 4V1h3M11 1h3v3M1 10v3h3" stroke="#888" strokeDasharray="2 1" />
          <circle cx="13" cy="13" r="4" fill="#eee" stroke="#777" /><path d="M16 16l4 4" stroke="#777" strokeWidth="2" />
        </Icon>
      </button>
      <Caret className="mt-2.5 opacity-60" />
      <Icon className="mt-auto mb-0.5 size-2.5 self-end"><circle cx="10" cy="10" r="8" fill="#eee" stroke="#999" strokeWidth="2" /><path d="M6 10h8" strokeWidth="2" /></Icon>
    </div>
  );
}

const RED_X = <path d="M11 10l8 9M19 10l-8 9" stroke="#d8262c" strokeWidth="2.6" />;

const VIEW_TOOLS = [
  <path d="M1 2h18v15H1zM1 3h18" fill="#e3e6ea" />,
  <path d="M1 7l6-5h12v10l-6 6H1zM1 7h12v11M13 7l6-5" fill="#eee" strokeWidth="1.6" />,
  <><circle cx="9" cy="9" r="5" fill="#f8cf45" stroke="#c68a17" /><path d="M9 0v3M0 9h3M3 3l2 2M15 3l-2 2M3 15l2-2" stroke="#c68a17" strokeWidth="1.6" />{RED_X}</>,
  <><circle cx="9" cy="8" r="6" fill="#d4e8f8" stroke="#3f88c8" strokeWidth="2" /><path d="M4 17h8" />{RED_X}</>,
  <><path d="M4 1v15h15M1 4h15v8M8 8h9M8 8v8" stroke="#2f6fae" strokeWidth="1.9" />{RED_X}</>,
  <><path d="M4 1v15h6M1 4h15M8 8h6M8 8v8" stroke="#2f6fae" strokeWidth="1.9" /><circle cx="15" cy="10" r="4" fill="#cfe7f9" stroke="#3f88c8" /><path d="M15 14v4" strokeWidth="3" /></>,
  <path d="M1 6l4-3 3 5M4 9a4 3 0 107 4M11 12a4 4 0 107-6l-3-3-3 1M11 12L3 7" strokeWidth="1.6" />,
  <><circle cx="10" cy="7" r="5" fill="#cfe7f9" stroke="#3f88c8" strokeWidth="1.6" /><path d="M10 12v5" stroke="#3f6f98" strokeWidth="4" /></>,
  <><path d="M1 4h17v5M3 1v16h7M1 14h5" strokeWidth="2.2" stroke="#333" strokeDasharray="3 1" /><circle cx="14" cy="14" r="4" fill="#ddd" strokeWidth="2" /></>,
  <><path d="M1 8l5-5h10M1 8v10h12M6 3v14M11 4v13M1 12h14" strokeWidth="1.6" /><path d="M3 12h8v6H3z" stroke="#d8362c" /><circle cx="15" cy="7" r="4" fill="#f8b93a" stroke="#e28512" /></>,
  <><path d="M2 1v18M18 1v9M2 4h16" strokeWidth="1.5" /><path d="M11 12h8v7h-8zM13 12c0-4 4-4 4 0" fill="#888" /></>,
];

function ViewArea() {
  return (
    <main className="flex min-w-0 flex-1 flex-col bg-[#efefef]">
      <div className="flex h-6 items-center justify-between bg-[#cacaca] pr-1">
        <div className="flex h-full w-[152px] items-center bg-white pr-1.5 pl-1.5 text-[13px] text-black">
          <PlanIcon className="size-[18px]" />
          <span className="ml-2.5 flex-1 whitespace-nowrap">配置図ビュー</span>
          <CloseButton />
        </div>
        <Icon className="size-4"><path d="M4 6h12" stroke="#222" strokeWidth="2" /><path d="M4 10h12l-6 6z" fill="#222" stroke="none" /></Icon>
      </div>
      <div className="flex min-h-0 flex-1">
        <div className="relative min-w-0 flex-1 bg-white">
          <div className="absolute inset-0">
            <SitePlan />
          </div>
          <NavigationBar />
        </div>
        <div className="relative flex w-[23px] flex-col justify-between bg-[#efefef] py-2 pl-1.5 text-[#222]">
          <Chevron dir="up" />
          <div className="absolute top-[49%] left-0.5 h-5 w-[19px] bg-[#cbcbcb]" />
          <Chevron dir="down" />
        </div>
      </div>
      <div className="relative flex h-6 items-center pb-0.5 pl-9 text-xs text-[#222]">
        <span className="w-[71px]">1 : 100</span>
        <div className="flex items-center gap-[9px]">
          {VIEW_TOOLS.map((tool, i) => (
            <Icon key={i} className="size-[18px]">{tool}</Icon>
          ))}
          <Chevron dir="left" />
        </div>
        <div className="absolute left-[68%] h-5 w-5 bg-[#cbcbcb]" />
        <span className="ml-auto flex items-center gap-3 pr-1">
          <Chevron dir="right" />
          <Icon box="0 0 12 12" className="size-3">
            <path d="M8 2h3M4 6h3M8 6h3M0 10h3M4 10h3M8 10h3" stroke="#aaa" strokeWidth="2.5" />
          </Icon>
        </span>
      </div>
    </main>
  );
}

type Prop = {
  label: string;
  value?: string;
  kind?: "group" | "button" | "check" | "orientation" | "muted" | "scale";
};

const PROPS: Prop[] = [
  { label: "グラフィックス", kind: "group" },
  { label: "ビュー スケール", value: "1 : 100", kind: "scale" },
  { label: "スケールの値    1:", value: "100", kind: "muted" },
  { label: "モデル表示", value: "標準" },
  { label: "詳細レベル", value: "簡略" },
  { label: "パーツ表示", value: "オリジナルを表示" },
  { label: "表示/グラフィックスの上...", value: "編集...", kind: "button" },
  { label: "グラフィックス表示オプシ...", value: "編集...", kind: "button" },
  { label: "向き", value: "真北", kind: "orientation" },
  { label: "壁結合部表示", value: "" },
  { label: "専門分野", value: "" },
  { label: "隠線を表示", value: "専門分野別" },
  { label: "カラー スキームの場所", value: "背景" },
  { label: "カラー スキーム", value: "<なし>", kind: "button" },
  { label: "設備カラー スキーム", value: "編集...", kind: "button" },
  { label: "既定の解析表示スタイル", value: "なし" },
  { label: "太陽パス", kind: "check" },
  { label: "アンダーレイ", kind: "group" },
  { label: "範囲: 下部レベル", value: "なし" },
  { label: "図面見方向", value: "バインド解除", kind: "muted" },
  { label: "アンダーレイの方向", value: "見下げ", kind: "muted" },
  { label: "範囲", kind: "group" },
  { label: "ビューをトリミング", kind: "check" },
  { label: "トリミング領域を表示", kind: "check" },
  { label: "注釈トリミング", kind: "check" },
  { label: "ビュー範囲", value: "編集...", kind: "button" },
  { label: "関連したレベル", value: "設計GL", kind: "muted" },
  { label: "スコープ ボックス", value: "なし" },
];

function OrientationPicker() {
  return (
    <div className="absolute -top-3 -left-[13px] z-20 h-[85px] w-[182px] rounded-lg border-[9px] border-[#fb1404] bg-white pt-[3px] pl-1">
      <div className="flex h-5 items-center">
        <select id="orientation" defaultValue="真北" className="h-[18px] w-7 appearance-none bg-[#0074d9] text-[13px] leading-[18px] text-white">
          <option>真北</option>
          <option>プロジェクトの北</option>
        </select>
      </div>
      <ul className="w-[156px] border border-[#888] bg-white">
        <li className="h-5 leading-5">プロジェクトの北</li>
        <li className="h-[18px] bg-[#0074d9] leading-[18px] text-white">真北</li>
      </ul>
      <Icon box="0 0 30 38" className="absolute -top-0.5 right-0 h-[38px] w-[30px]">
        <circle cx="14" cy="13" r="11.5" fill="#f2e13c" stroke="none" />
        <path d="M15 12l4 4 4-4" stroke="#8a7d1c" />
        <path d="M14 12v20l5-4 3 7 4-2-3-7h6z" fill="#fff" stroke="#777" />
      </Icon>
    </div>
  );
}

function PropertyRow({ prop, index }: { prop: Prop; index: number }) {
  if (prop.kind === "group") {
    return (
      <tr className="bg-[#dcdcdc] odd:h-[22px] even:h-[23px]">
        <th colSpan={3} className="relative p-0 pl-0.5 text-left font-normal">
          {prop.label}
          <span className="absolute top-0.5 right-1 flex flex-col">
            <Chevron dir="up" className="size-1" />
            <Chevron dir="up" className="size-1" />
          </span>
        </th>
      </tr>
    );
  }
  const id = prop.kind === "orientation" ? "orientation" : `prop-${index}`;
  return (
    <tr className={clsx("border-b border-[#dedede] odd:h-[22px] even:h-[23px]", prop.kind === "muted" && "text-[#8d8d8d]")}>
      <th className="p-0 pl-2.5 text-left font-normal whitespace-pre">
        <label htmlFor={id} className="block">{prop.label}</label>
      </th>
      <td className="relative border-x border-[#dedede] p-0">
        {prop.kind === "button" && (
          <button id={id} className="block h-[21px] w-full border border-[#bbb] border-r-[#999] border-b-[#999] bg-[#e1e1e1] leading-[18px]">
            {prop.value}
          </button>
        )}
        {prop.kind === "check" && <input id={id} type="checkbox" className="ml-px block size-4 appearance-none border border-[#333] bg-white" />}
        {prop.kind === "orientation" && <OrientationPicker />}
        {(!prop.kind || prop.kind === "muted") && <span className="pl-px">{prop.value}</span>}
        {prop.kind === "scale" && <span className="pl-1.5">{prop.value}</span>}
      </td>
      <td />
    </tr>
  );
}

function Properties() {
  return (
    <aside className="flex w-[356px] shrink-0 flex-col border-l-[3px] border-[#cacaca] bg-[#efefef] pr-0.5 pl-px text-[13px]">
      <header className="flex h-[26px] items-center justify-between border-b-2 border-[#8d8d90] pr-1 pl-1">
        <h2>プロパティ</h2>
        <CloseButton />
      </header>
      <div className="flex h-[85px] items-center border-b-2 border-[#6f6f72] pr-0.5 pl-1">
        <div className="flex h-[78px] w-[78px] items-center justify-center border border-[#ccc]">
          <PlanIcon className="size-[38px]" />
        </div>
        <span className="ml-1.5 flex-1">平面図</span>
        <Caret className="h-[5px] w-2" />
      </div>
      <div className="flex h-6 items-center">
        <div className="relative h-full flex-1">
          <select aria-label="インスタンス" className="h-full w-full appearance-none bg-[#e2e2e2] pl-0.5">
            <option>平面図: 配置図ビュー</option>
          </select>
          <Chevron dir="down" className="absolute top-2 right-1 text-[#888]" />
        </div>
        <button className="flex w-[80px] items-center gap-0.5 pl-0.5 whitespace-nowrap">
          <Icon className="size-3"><path d="M1 2h7v15H1zM1 9h7M10 6h9v11h-9zM10 11h9M14 6v11" stroke="#688" strokeWidth="1.8" /></Icon>
          タイプ編集
        </button>
      </div>
      <div className="flex">
        <div className="min-w-0 flex-1">
          <table className="w-full table-fixed border-collapse bg-white leading-[18px] text-[#333]">
            <colgroup>
              <col />
              <col className="w-[158px]" />
              <col className="w-[14px]" />
            </colgroup>
            <tbody>
              {PROPS.map((prop, i) => (
                <PropertyRow key={i} prop={prop} index={i} />
              ))}
            </tbody>
          </table>
        </div>
        <div className="flex w-5 flex-col items-center justify-between pt-1.5 pb-1 pl-px text-[#222]">
          <Chevron dir="up" />
          <div className="mt-1 mb-auto h-[66%] w-full bg-[#cbcbcb]" />
          <Chevron dir="down" />
        </div>
      </div>
      <footer className="flex flex-1 items-center justify-between pl-0.5">
        <a href="#help" className="self-start pt-1 text-xs text-[#2f7fc8] underline">プロパティ ヘルプ</a>
        <button className="h-6 w-24 border-2 border-[#4a94d8] bg-[#e1e1e1]">適用</button>
      </footer>
    </aside>
  );
}

const CURSOR = <path d="M11 7v12l3-3 2 4 2-1-2-4h4z" fill="#fff" stroke="#333" strokeWidth="1" />;

const SELECT_TOOLS = [
  <><rect x="1" y="2" width="8" height="8" rx="3" fill="#f4bd30" stroke="#a8740c" /><rect x="10" y="2" width="8" height="8" rx="3" fill="#f4bd30" stroke="#a8740c" />{CURSOR}</>,
  <><path d="M1 15h10l5-11L5 9z" stroke="#2f6fae" fill="#cfe0f0" /><path d="M12 1l7 7M19 1l-7 7" stroke="#d8262c" strokeWidth="2.2" />{CURSOR}</>,
  <><path d="M2 1h12v4l-2 1v4h3v3H2v-3h3V6L2 5zM8 13v6" fill="#f0893c" stroke="#b64e18" />{CURSOR}</>,
  <><path d="M2 4l8-2v13l-8 3z" fill="#8fc6ee" stroke="#2f6fae" /><path d="M12 1l7 7M19 1l-7 7" stroke="#d8262c" strokeWidth="2.2" />{CURSOR}</>,
  <><path d="M7 1v12M1 7h12M5 3l2-2 2 2M3 5L1 7l2 2M11 5l2 2-2 2" stroke="#333" />{CURSOR}</>,
  <circle cx="10" cy="10" r="7" stroke="#a3a3a3" strokeWidth="4" strokeDasharray="4 1.5" />,
  <path d="M1 2h18l-7 8v8H8v-8z" fill="#b8c0c8" strokeWidth="1.6" />,
];

function StatusBar() {
  return (
    <footer className="flex h-[30px] items-center bg-[#c9c9c9] pl-0.5 text-[13px] text-[#333]">
      <span className="w-[537px] whitespace-nowrap">選択＝クリック、次へ＝[Tab]、追加＝[Ctrl]、選択解除＝[Shift]。</span>
      <Icon><path d="M1 8l4-2 5 2v8l-4 3-5-3zM1 8l5 2v9" fill="#c9e3f7" stroke="#2f6fae" /><path d="M6 3c3-3 7-2 9 0-2 3-6 3-6 6" fill="#8fd08a" stroke="#2c8a3a" /><path d="M16 8v11" stroke="#4a78a8" strokeWidth="3" /></Icon>
      <div className="relative ml-1 h-[21px] w-[240px]">
        <select aria-label="ワークセット" className="h-full w-full appearance-none bg-white" />
        <Chevron dir="down" className="absolute top-1.5 right-1.5 size-2 text-[#aaa]" />
      </div>
      <Icon className="ml-1.5 size-[18px]"><path d="M6 2h12v6l-5 2-3-2M10 9l-6 4v5h8v-5" fill="#ddd" stroke="#999" /></Icon>
      <span className="ml-1.5 pt-1 text-xs">:0</span>
      <Icon className="ml-4"><rect x="1" y="1" width="18" height="18" fill="#f0f0f0" stroke="#333" strokeWidth="2" /><path d="M1 4h18M5 8h3M5 14h3M9 8h7M9 11h7M9 15h7" stroke="#333" strokeWidth="1.6" /></Icon>
      <Icon className="ml-1.5"><path d="M1 1h18v18H1z" fill="#999" stroke="none" /><path d="M2 12h9M8 8l4 4-4 4" stroke="#ddd" strokeWidth="2" /></Icon>
      <div className="relative ml-1 h-[21px] w-[241px]">
        <select aria-label="アクティブなデザイン オプション" className="h-full w-full appearance-none bg-white pl-0.5 text-xs text-[#777]">
          <option>メイン モデル</option>
        </select>
        <Chevron dir="down" className="absolute top-1.5 right-1.5 size-2 text-[#aaa]" />
      </div>
      <div className="ml-auto flex items-center gap-1.5 pr-[42px]">
        {SELECT_TOOLS.map((tool, i) => (
          <Icon key={i}>{tool}</Icon>
        ))}
        <span className="-ml-1.5 text-xs">:0</span>
      </div>
    </footer>
  );
}

function TaskItem({ label, running, children }: { label: string; running?: boolean; children: ReactNode }) {
  return (
    <button
      aria-label={label}
      className={clsx("flex h-[47px] w-12 items-center justify-center border-b-[3px]", running ? "border-[#a5dcf0]" : "border-transparent")}
    >
      {children}
    </button>
  );
}

function Taskbar() {
  return (
    <div className="flex h-[47px] items-center bg-[#021319] text-white">
      <div className="flex items-center gap-2.5 pl-1">
        <TaskItem label="スタート">
          <Icon><path d="M0 3l9-1v8H0zM10 2l10-2v10H10zM0 11h9v8l-9-1zM10 11h10v9l-10-1z" fill="#fff" stroke="none" /></Icon>
        </TaskItem>
        <TaskItem label="検索">
          <Icon><circle cx="10" cy="10" r="8" stroke="#fff" strokeWidth="2.4" /></Icon>
        </TaskItem>
        <TaskItem label="タスク ビュー">
          <Icon><path d="M1 1v3h12V1M1 19v-3h12v3M2 7h10v6H2zM17 1v3M17 8v11" stroke="#fff" strokeWidth="1.6" /><path d="M15.5 4.5h3v3h-3z" fill="#fff" stroke="none" /></Icon>
        </TaskItem>
        <TaskItem label="エクスプローラー" running>
          <Icon box="0 0 26 24" className="h-6 w-[26px]">
            <path d="M0 1h10l2 3h13v19H0z" fill="#f7d774" stroke="none" /><path d="M0 1h10v4H0z" fill="#e9b93f" stroke="none" />
            <path d="M5 23v-9h16v9h-4v-5H9v5z" fill="#2f9fe0" stroke="none" />
          </Icon>
        </TaskItem>
        <TaskItem label="OBS" running>
          <Icon box="0 0 28 28" className="size-7">
            <circle cx="14" cy="14" r="12.5" fill="#2b2b30" stroke="#e8e8e8" strokeWidth="1.6" />
            <path d="M14 13c-5-1-6-5-3-9M14 13c4-3 8-1 9 4M14 13c1 5-2 8-7 7" stroke="#e8e8e8" strokeWidth="2" />
          </Icon>
        </TaskItem>
        <TaskItem label="ポインター" running>
          <Icon box="0 0 28 28" className="size-7"><circle cx="14" cy="14" r="13.5" fill="#ff0" stroke="none" /></Icon>
        </TaskItem>
        <TaskItem label="Revit" running>
          <span className="flex size-7 items-center justify-center bg-[#d8e6f5]"><RevitMark className="size-[22px]" /></span>
        </TaskItem>
      </div>
      <div className="ml-auto flex h-full items-center gap-[22px] pr-1">
        <Chevron dir="up" className="size-4" />
        <Icon box="0 0 30 20" className="h-[18px] w-7">
          <rect x="1" y="1" width="28" height="18" stroke="#fff" strokeWidth="2" />
          <path d="M4 6h22M4 10h22M8 14h14" stroke="#fff" strokeWidth="2" strokeDasharray="2 1.5" />
        </Icon>
        <span className="-mx-1 text-xl">A</span>
        <Icon><path d="M1 2h18v13h-6l-3 3-3-3H1z" stroke="#fff" strokeWidth="1.8" /></Icon>
        <span className="h-full w-px bg-[#5b666b]" />
      </div>
    </div>
  );
}

export default function App() {
  return (
    <div className="relative min-h-screen bg-white px-[150px] font-['Open_Sans','Noto_Sans_CJK_JP',sans-serif] text-[#444] [font-feature-settings:'palt']">
      <div className="flex min-h-screen flex-col">
        <div className="bg-[#cbcbcb]">
          <div className="flex h-9 items-center pb-1">
            <QuickAccess />
            <h1 className="ml-30 text-[13px] whitespace-nowrap">
              Autodesk Revit 2020.2 - 二上Exercise0307(2015) - 平面図: 配置図ビュー
            </h1>
            <span className="ml-auto flex items-center gap-3 pr-[386px]">
              <Icon box="0 0 5 8" className="h-2 w-[5px]"><path d="M5 0v8L0 4z" fill="#222" stroke="none" /></Icon>
              <Icon><path d="M2 9h6v9H2zM12 9h6v9h-6zM3 9l1-6h3l1 6M12 9l1-6h3l1 6M8 10h4M3 15h4M13 15h4" stroke="#333" strokeWidth="1.8" fill="#eee" /></Icon>
            </span>
          </div>
          <TabBar />
        </div>
        <Ribbon />
        <div className="h-8 shrink-0 border-b-2 border-[#cfcfcf] bg-[#efefef]" />
        <div className="flex flex-1">
          <ProjectBrowser />
          <ViewArea />
          <Properties />
        </div>
        <StatusBar />
        <Taskbar />
      </div>

      <div className="absolute top-0 right-0 flex h-[58px] w-[534px] items-center justify-center bg-[#304595] pb-1 pl-3 text-[30px] font-bold text-white [font-feature-settings:normal]">
        真北を設定します
      </div>

      <div className="pointer-events-none absolute top-[539px] left-[356px] z-10 flex items-center text-[#fb0a04]">
        <p className="text-[60px] leading-[60px] font-bold whitespace-nowrap [font-feature-settings:normal] [text-shadow:0_0_2px_white]">
          プロジェクトの北にいつでも戻せます
        </p>
        <Icon box="0 0 180 30" className="ml-1.5 h-[30px] w-[180px]">
          <path d="M0 15h54M40 3l14 12-14 12M60 15h54M100 3l14 12-14 12M120 15h54M160 3l14 12-14 12" stroke="#fb0a04" strokeWidth="2" />
        </Icon>
      </div>
    </div>
  );
}
